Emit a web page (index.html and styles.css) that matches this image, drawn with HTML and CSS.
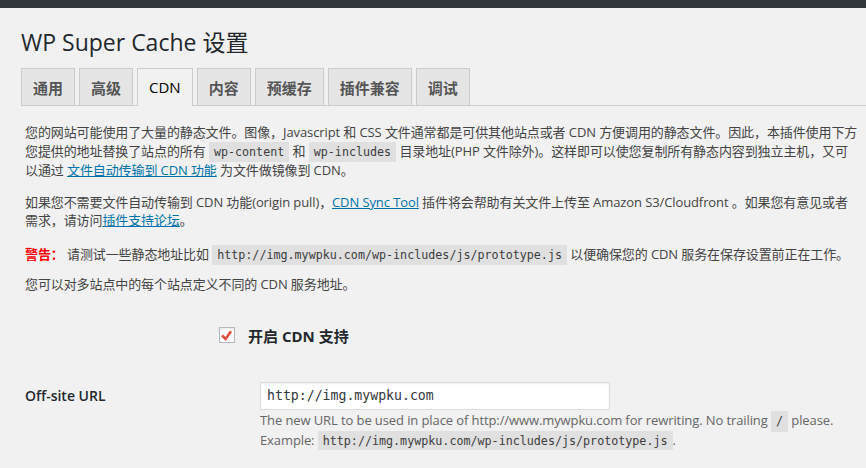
FILE: index.html
```html
<!DOCTYPE html>
<html lang="zh-CN">
<head>
<meta charset="utf-8">
<title>WP Super Cache 设置</title>
<link rel="stylesheet" href="styles.css">
</head>
<body>
<div class="adminbar"></div>
<div class="wrap">
  <h1 class="title">WP Super Cache 设置</h1>
  <nav class="tabs">
    <a class="tab">通用</a>
    <a class="tab">高级</a>
    <a class="tab active">CDN</a>
    <a class="tab">内容</a>
    <a class="tab">预缓存</a>
    <a class="tab">插件兼容</a>
    <a class="tab">调试</a>
  </nav>
  <div class="content">
    <p>您的网站可能使用了大量的静态文件。图像，Javascript 和 CSS 文件通常都是可供其他站点或者 CDN 方便调用的静态文件。因此，本插件使用下方您提供的地址替换了站点的所有 <code>wp-content</code> 和 <code>wp-includes</code> 目录地址(PHP 文件除外)。这样即可以使您复制所有静态内容到独立主机，又可以通过 <a class="link">文件自动传输到 CDN 功能</a> 为文件做镜像到 CDN。</p>
    <p>如果您不需要文件自动传输到 CDN 功能(origin pull)，<a class="link">CDN Sync Tool</a> 插件将会帮助有关文件上传至 Amazon S3/Cloudfront 。如果您有意见或者需求，请访问<a class="link">插件支持论坛</a>。</p>
    <p class="warning"><strong class="warn-label">警告：</strong> 请测试一些静态地址比如 <code>http://img.mywpku.com/wp-includes/js/prototype.js</code> 以便确保您的 CDN 服务在保存设置前正在工作。</p>
    <p class="note">您可以对多站点中的每个站点定义不同的 CDN 服务地址。</p>

    <div class="cdn-toggle">
      <span class="checkbox"><svg width="14" height="14" viewBox="0 0 14 14"><polyline points="2,7.4 5.6,11 11,3.2" fill="none" stroke="#e14d43" stroke-width="2.6"/></svg></span>
      <span class="toggle-label">开启 CDN 支持</span>
    </div>

    <div class="field">
      <div class="field-label">Off-site URL</div>
      <div class="field-body">
        <div class="text-input">http://img.mywpku.com</div>
        <p class="description">The new URL to be used in place of http://www.mywpku.com for rewriting. No trailing <code>/</code> please.<br>Example: <code>http://img.mywpku.com/wp-includes/js/prototype.js</code>.</p>
      </div>
    </div>
  </div>
</div>
</body>
</html>
```
FILE: styles.css
```css
html, body {
  margin: 0;
  padding: 0;
  background: #f1f1f1;
}

body {
  font-family: "Open Sans", "Noto Sans CJK SC", sans-serif;
  color: #444;
  font-size: 13px;
}

.adminbar {
  height: 8px;
  background: #32373c;
}

.wrap {
  padding-left: 21px;
}

.title {
  margin: 20px 0 11px;
  font-size: 23px;
  line-height: 29px;
  font-weight: 400;
  color: #23282d;
}

.tabs {
  display: flex;
  gap: 4px;
  border-bottom: 1px solid #ccc;
}

.tab {
  box-sizing: border-box;
  height: 37px;
  padding: 0 11px;
  display: flex;
  align-items: center;
  border: 1px solid #ccc;
  border-bottom: 0;
  background: #e5e5e5;
  color: #555;
  font-family: "Noto Sans CJK SC", sans-serif;
  font-size: 15px;
  font-weight: 700;
}

.tab.active {
  height: 38px;
  margin-bottom: -1px;
  padding-bottom: 1px;
  background: #f1f1f1;
  color: #000;
  font-family: "Open Sans", sans-serif;
  font-weight: 400;
}

.content {
  padding: 4px 6px 0 4px;
}

.content p {
  margin: 13px 0;
  line-height: 18.5px;
  letter-spacing: -0.1px;
}

.content p.warning {
  line-height: 22px;
  margin-bottom: 9px;
}

.content p.note {
  margin-top: 9px;
}

code {
  font-family: "DejaVu Sans Mono", "Liberation Mono", monospace;
  font-size: 11.7px;
  letter-spacing: 0;
  padding: 3px 5px 3.5px;
  background: rgba(0, 0, 0, 0.07);
  color: #3c3c3c;
}

.link {
  color: #0073aa;
  text-decoration: underline;
}

.warn-label {
  color: #f00;
  font-weight: 700;
}

.cdn-toggle {
  margin-top: 30px;
  height: 24px;
  display: flex;
  align-items: center;
  padding-left: 194px;
}

.checkbox {
  box-sizing: border-box;
  width: 16px;
  height: 16px;
  border: 1px solid #b4b9be;
  background: #fff;
  box-shadow: inset 0 1px 2px rgba(0, 0, 0, 0.1);
  display: flex;
}

.toggle-label {
  margin-left: 13px;
  font-size: 15px;
  font-weight: 700;
  color: #23282d;
}

.field {
  margin-top: 35px;
  display: grid;
  grid-template-columns: 235px 1fr;
}

.field-label {
  line-height: 28px;
  font-size: 14px;
  font-weight: 600;
  color: #23282d;
}

.text-input {
  box-sizing: border-box;
  width: 350px;
  height: 28px;
  padding: 0 6px;
  border: 1px solid #ddd;
  background: #fff;
  box-shadow: inset 0 1px 2px rgba(0, 0, 0, 0.07);
  font-family: "DejaVu Sans Mono", "Liberation Mono", monospace;
  font-size: 13.2px;
  line-height: 26px;
  color: #32373c;
}

.content p.description {
  margin: 1px 0 0;
  color: #666;
  line-height: 18.5px;
}
```
